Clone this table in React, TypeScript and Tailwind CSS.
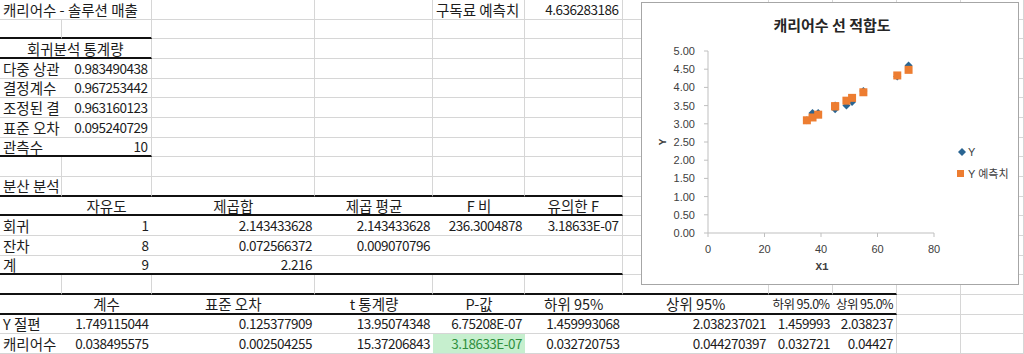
import React from "react";

const W = [61.5, 90, 163.5, 118, 92, 97.5, 146.5, 64, 64, 64, 63];

type Cell = { t?: string; a?: "l" | "r" | "c"; span?: number; g?: boolean; s?: boolean };
type Row = { cells: Cell[]; table?: number; thick?: number };

const e = (n: number): Cell[] => Array.from({ length: n }, () => ({}));
const L = (t: string): Cell => ({ t });
const N = (t: string): Cell => ({ t, a: "r" });
const H = (t: string): Cell => ({ t, a: "c" });

const rows: Row[] = [
  { cells: [{ t: "캐리어수 - 솔루션 매출", span: 2 }, ...e(2), L("구독료 예측치"), N("4.636283186"), ...e(5)] },
  { cells: e(11), thick: 2 },
  { cells: [{ t: "회귀분석 통계량", a: "c", span: 2 }, ...e(9)], table: 2, thick: 2 },
  { cells: [L("다중 상관"), N("0.983490438"), ...e(9)], table: 2 },
  { cells: [L("결정계수"), N("0.967253442"), ...e(9)], table: 2 },
  { cells: [L("조정된 결"), N("0.963160123"), ...e(9)], table: 2 },
  { cells: [L("표준 오차"), N("0.095240729"), ...e(9)], table: 2 },
  { cells: [L("관측수"), N("10"), ...e(9)], table: 2, thick: 2 },
  { cells: e(11) },
  { cells: [L("분산 분석"), ...e(10)], thick: 6 },
  { cells: [{}, H("자유도"), H("제곱합"), H("제곱 평균"), H("F 비"), H("유의한 F"), ...e(5)], table: 6, thick: 6 },
  { cells: [L("회귀"), N("1"), N("2.143433628"), N("2.143433628"), N("236.3004878"), N("3.18633E-07"), ...e(5)], table: 6 },
  { cells: [L("잔차"), N("8"), N("0.072566372"), N("0.009070796"), ...e(7)], table: 6 },
  { cells: [L("계"), N("9"), N("2.216"), ...e(8)], table: 6, thick: 6 },
  { cells: e(11), thick: 9 },
  {
    cells: [
      {},
      H("계수"),
      H("표준 오차"),
      H("t 통계량"),
      H("P-값"),
      H("하위 95%"),
      H("상위 95%"),
      { t: "하위 95.0%", a: "c", s: true },
      { t: "상위 95.0%", a: "c", s: true },
      ...e(2),
    ],
    table: 9,
    thick: 9,
  },
  {
    cells: [L("Y 절편"), N("1.749115044"), N("0.125377909"), N("13.95074348"), N("6.75208E-07"), N("1.459993068"), N("2.038237021"), N("1.459993"), N("2.038237"), ...e(2)],
    table: 9,
  },
  {
    cells: [L("캐리어수"), N("0.038495575"), N("0.002504255"), N("15.37206843"), { t: "3.18633E-07", a: "r", g: true }, N("0.032720753"), N("0.044270397"), N("0.032721"), N("0.04427"), ...e(2)],
    table: 9,
  },
];

function SheetRow({ row }: { row: Row }) {
  let col = 0;
  return (
    <div className="flex h-[19.67px]">
      {row.cells.map((c, i) => {
        const span = c.span ?? 1;
        const start = col;
        col += span;
        const end = col;
        const width = W.slice(start, end).reduce((s, v) => s + v, 0);
        const inTable = row.table !== undefined && end < row.table;
        const thick = row.thick !== undefined && start < row.thick;
        const align =
          c.a === "r"
            ? "justify-end px-[3px] text-right text-[13.5px] tracking-[-0.5px]"
            : c.a === "c"
              ? c.s
                ? "justify-center px-0 text-center text-[12.5px] tracking-[-0.6px]"
                : "justify-center px-[3px] text-center"
              : "justify-start px-[3px]";
        return (
          <div
            key={i}
            style={{ width }}
            className={`flex shrink-0 items-center whitespace-nowrap ${align} ${
              thick ? "border-b-2 border-b-[#111]" : "border-b border-b-[#d6d6d6]"
            } ${inTable ? "" : "border-r border-r-[#d6d6d6]"} ${c.g ? "bg-[#c6efce] text-[#2f8f3e]" : ""}`}
          >
            {c.t}
          </div>
        );
      })}
    </div>
  );
}

const xs = [35, 37, 39, 45, 45, 49, 51, 55, 67, 71];
const ys = [3.1, 3.3, 3.3, 3.4, 3.5, 3.5, 3.6, 3.9, 4.3, 4.6];
const px = (x: number) => 65 + x * 2.825;
const py = (y: number) => 229 - y * 36.4;

function Chart() {
  const yTicks = Array.from({ length: 11 }, (_, i) => i * 0.5);
  const xTicks = [0, 20, 40, 60, 80];
  return (
    <div className="absolute left-[641px] top-[2px] h-[283px] w-[378px] border border-[#a6a6a6] bg-white">
      <svg width="378" height="283" viewBox="-1 -1 378 283" className="block">
        <text x="189" y="27" textAnchor="middle" fontSize="15" fontWeight="700" fill="#262626" fontFamily="'Noto Sans CJK KR', sans-serif">
          캐리어수 선 적합도
        </text>
        <line x1="65" y1="47" x2="65" y2="229" stroke="#bfbfbf" />
        <line x1="65" y1="229" x2="291" y2="229" stroke="#bfbfbf" />
        {yTicks.map((v) => (
          <g key={v}>
            <line x1="61" y1={py(v)} x2="65" y2={py(v)} stroke="#bfbfbf" />
            <text x="52" y={py(v) + 4} textAnchor="end" fontSize="11" fill="#404040" fontFamily="'Liberation Sans', sans-serif">
              {v.toFixed(2)}
            </text>
          </g>
        ))}
        {xTicks.map((v) => (
          <g key={v}>
            <line x1={px(v)} y1="229" x2={px(v)} y2="233" stroke="#bfbfbf" />
            <text x={px(v)} y="249" textAnchor="middle" fontSize="11" fill="#404040" fontFamily="'Liberation Sans', sans-serif">
              {v}
            </text>
          </g>
        ))}
        <text x="179" y="266" textAnchor="middle" fontSize="11" fontWeight="700" fill="#404040" fontFamily="'Liberation Mono', monospace">
          X1
        </text>
        <text x="0" y="0" transform="translate(23 138) rotate(-90)" textAnchor="middle" fontSize="11" fontWeight="700" fill="#404040" fontFamily="'Liberation Mono', monospace">
          Y
        </text>
        {xs.map((x, i) => (
          <path key={`d${i}`} d={`M${px(x)} ${py(ys[i]) - 4}l4 4l-4 4l-4 -4z`} fill="#2a6592" />
        ))}
        {xs.map((x, i) => (
          <rect key={`s${i}`} x={px(x) - 4} y={py(1.749115 + 0.038496 * x) - 4} width="8" height="8" fill="#ed7d31" />
        ))}
        <path d="M319 144l4 4l-4 4l-4 -4z" fill="#2a6592" />
        <text x="325" y="152" fontSize="11" fill="#404040" fontFamily="'Liberation Sans', sans-serif">
          Y
        </text>
        <rect x="314" y="166" width="7" height="7" fill="#ed7d31" />
        <text x="325" y="174" fontSize="11" fill="#404040" fontFamily="'Liberation Sans', 'Noto Sans CJK KR', sans-serif">
          Y 예측치
        </text>
      </svg>
    </div>
  );
}

export default function App() {
  return (
    <div className="relative h-[354px] w-[1024px] overflow-hidden bg-white text-[14.5px] leading-[17px] text-[#1c1c1c] [font-family:'Noto_Sans_CJK_KR',sans-serif]">
      {rows.map((r, i) => (
        <SheetRow key={i} row={r} />
      ))}
      <Chart />
    </div>
  );
}
